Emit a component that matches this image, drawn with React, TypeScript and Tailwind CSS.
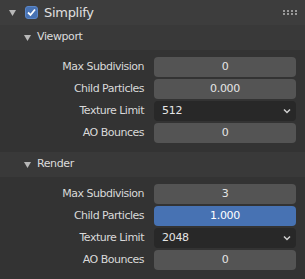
import React from "react";

const Tri = () => (
  <svg width="7" height="6" viewBox="0 0 7 6" className="shrink-0">
    <path d="M0 0 H7 L3.5 6 Z" fill="#b8b8b8" />
  </svg>
);

function NumField({ value, active }: { value: string; active?: boolean }) {
  return (
    <div
      className={`h-[20px] w-[142px] rounded-[4px] flex items-center justify-center text-[11px] tracking-[-0.3px] ${
        active ? "bg-[#4772b3] text-[#ffffff]" : "bg-[#545454] text-[#e5e5e5]"
      }`}
    >
      {value}
    </div>
  );
}

function Dropdown({ value }: { value: string }) {
  return (
    <div className="h-[20px] w-[142px] rounded-[4px] bg-[#282828] flex items-center justify-between pl-[8px] pr-[5px] text-[11px] tracking-[-0.3px] text-[#e5e5e5]">
      <span>{value}</span>
      <svg width="8" height="6" viewBox="0 0 8 6">
        <path d="M1 1.5 L4 4.5 L7 1.5" stroke="#cfcfcf" strokeWidth="1.5" fill="none" />
      </svg>
    </div>
  );
}

function Row({ label, children }: { label: string; children: React.ReactNode }) {
  return (
    <div className="flex items-center h-[22px]">
      <div className="w-[145px] pr-[10px] text-right text-[11px] tracking-[-0.5px] text-[#d9d9d9]">{label}</div>
      {children}
    </div>
  );
}

function Sub({ title, rows }: { title: string; rows: React.ReactNode }) {
  return (
    <div className="flex flex-col">
      <div className="h-[25px] bg-[#393939] flex items-center pl-[24px] gap-[6px] text-[11px] tracking-[-0.4px] text-[#dcdcdc]">
        <Tri />
        <span>{title}</span>
      </div>
      <div className="bg-[#333333] pt-[6px] pb-[8px] pl-[9px]">{rows}</div>
    </div>
  );
}

export default function App() {
  return (
    <div className="w-[305px] h-[279px] bg-[#303030] overflow-hidden font-['DejaVu_Sans',sans-serif]">
      <div className="h-[25px] bg-[#3d3d3d] flex items-center pl-[9px] pr-[8px]">
        <Tri />
        <div className="ml-[9px] w-[13px] h-[13px] rounded-[3px] bg-[#4772b3] border border-[#5a86c8] flex items-center justify-center">
          <svg width="11" height="11" viewBox="0 0 11 11">
            <path d="M2 5.5 L4.5 8 L9 2.5" stroke="#ffffff" strokeWidth="1.8" fill="none" />
          </svg>
        </div>
        <span className="ml-[6px] text-[13px] tracking-[-0.3px] text-[#e0e0e0]">Simplify</span>
        <div className="ml-auto grid grid-cols-4 gap-x-[2px] gap-y-[1px]">
          {Array.from({ length: 8 }).map((_, i) => (
            <div key={i} className="w-[2px] h-[2px] bg-[#9a9a9a]" />
          ))}
        </div>
      </div>
      <Sub
        title="Viewport"
        rows={
          <>
            <Row label="Max Subdivision"><NumField value="0" /></Row>
            <Row label="Child Particles"><NumField value="0.000" /></Row>
            <Row label="Texture Limit"><Dropdown value="512" /></Row>
            <Row label="AO Bounces"><NumField value="0" /></Row>
          </>
        }
      />
      <Sub
        title="Render"
        rows={
          <>
            <Row label="Max Subdivision"><NumField value="3" /></Row>
            <Row label="Child Particles"><NumField value="1.000" active /></Row>
            <Row label="Texture Limit"><Dropdown value="2048" /></Row>
            <Row label="AO Bounces"><NumField value="0" /></Row>
          </>
        }
      />
    </div>
  );
}
